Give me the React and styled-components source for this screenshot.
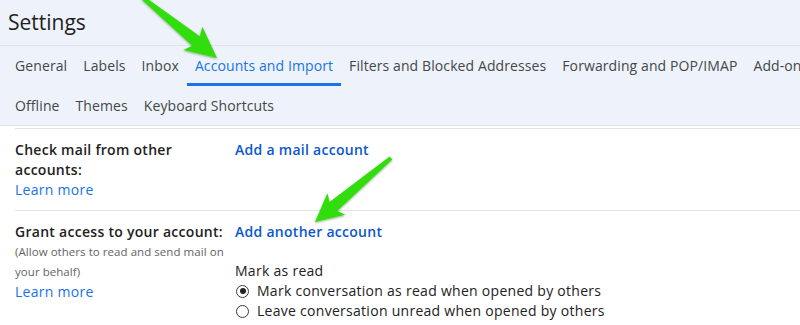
import styled, { createGlobalStyle } from 'styled-components';

const GlobalStyle = createGlobalStyle`
  html, body {
    margin: 0;
    padding: 0;
    background: #ffffff;
  }
  body {
    font-family: "Open Sans", Roboto, "Noto Sans", Arial, sans-serif;
    -webkit-font-smoothing: antialiased;
  }
`;

const arrowPoints = (tail, tip, head = 27, wing = 15, shaftTail = 1.5, shaftHead = 5.5) => {
  const dx = tip[0] - tail[0];
  const dy = tip[1] - tail[1];
  const len = Math.hypot(dx, dy);
  const ux = dx / len;
  const uy = dy / len;
  const nx = -uy;
  const ny = ux;
  const bx = tip[0] - ux * head;
  const by = tip[1] - uy * head;
  const wx = bx - ux * 4;
  const wy = by - uy * 4;
  const pts = [
    [tail[0] + nx * shaftTail, tail[1] + ny * shaftTail],
    [bx + nx * shaftHead, by + ny * shaftHead],
    [wx + nx * wing, wy + ny * wing],
    tip,
    [wx - nx * wing, wy - ny * wing],
    [bx - nx * shaftHead, by - ny * shaftHead],
    [tail[0] - nx * shaftTail, tail[1] - ny * shaftTail],
  ];
  return pts.map((p) => p.map((v) => v.toFixed(1)).join(',')).join(' ');
};

function App() {
  return (
    <>
      <GlobalStyle />
      <Page>
        <Header>
          <Title>Settings</Title>
        </Header>
        <Tabs>
          <TabRow>
            <Tab>General</Tab>
            <Tab>Labels</Tab>
            <Tab>Inbox</Tab>
            <Tab $active>Accounts and Import</Tab>
            <Tab>Filters and Blocked Addresses</Tab>
            <Tab>Forwarding and POP/IMAP</Tab>
            <Tab>Add-ons</Tab>
          </TabRow>
          <TabRow>
            <Tab>Offline</Tab>
            <Tab>Themes</Tab>
            <Tab>Keyboard Shortcuts</Tab>
          </TabRow>
        </Tabs>
        <Content>
          <Section>
            <Label>
              <LabelTitle>Check mail from other accounts:</LabelTitle>
              <Learn>Learn more</Learn>
            </Label>
            <Value>
              <Action>Add a mail account</Action>
            </Value>
          </Section>
          <Section>
            <Label>
              <LabelTitle>Grant access to your account:</LabelTitle>
              <Hint>
                (Allow others to read and send mail on
                <br />
                your behalf)
              </Hint>
              <Learn>Learn more</Learn>
            </Label>
            <Value>
              <Action>Add another account</Action>
              <SubHead>Mark as read</SubHead>
              <Option>
                <Radio $checked />
                Mark conversation as read when opened by others
              </Option>
              <Option>
                <Radio />
                Leave conversation unread when opened by others
              </Option>
            </Value>
          </Section>
        </Content>
        <Overlay width="800" height="325" viewBox="0 0 800 325">
          <defs>
            <filter id="shade" x="-20%" y="-20%" width="140%" height="140%">
              <feDropShadow dx="0" dy="1" stdDeviation="1.2" floodColor="#1a4d00" floodOpacity="0.45" />
            </filter>
          </defs>
          <polygon points={arrowPoints([143, -2], [217, 58], 27, 15, 2, 6)} fill="#33dd0a" filter="url(#shade)" />
          <polygon points={arrowPoints([391, 158], [315, 222], 24, 14, 2, 6)} fill="#33dd0a" filter="url(#shade)" />
        </Overlay>
      </Page>
    </>
  );
}

export default App;

const Page = styled.div`
  position: relative;
  width: 800px;
  height: 325px;
  overflow: hidden;
  background: #ffffff;
`;

const Header = styled.div`
  height: 45px;
  display: flex;
  align-items: center;
  padding-left: 8px;
  background: #eef3fb;
  border-bottom: 1px solid #dde3ea;
`;

const Title = styled.h1`
  margin: 0;
  font-size: 21px;
  font-weight: 400;
  color: #1f1f1f;
  margin-top: -1px;
`;

const Tabs = styled.div`
  background: #eef3fb;
  border-bottom: 1px solid #dde3ea;
  padding: 0 7px;
  height: 79px;
`;

const TabRow = styled.div`
  display: flex;
  white-space: nowrap;
  height: 40px;
`;

const Tab = styled.div`
  display: flex;
  align-items: center;
  padding: 2px 8px 0;
  height: 40px;
  box-sizing: border-box;
  font-size: 14px;
  letter-spacing: 0.1px;
  color: ${(p) => (p.$active ? '#1a73e8' : '#444746')};
  border-bottom: 3px solid ${(p) => (p.$active ? '#1a73e8' : 'transparent')};
  line-height: 20px;
`;

const Content = styled.div`
  margin: 2px 0 0 15px;
  border-top: 1px solid #e3e3e3;
`;

const Section = styled.div`
  display: flex;
  padding: 11px 0 10px;
  border-bottom: 1px solid #e3e3e3;
  line-height: 20px;
  letter-spacing: 0.28px;
`;

const Label = styled.div`
  width: 220px;
  flex-shrink: 0;
  padding-right: 2px;
  box-sizing: border-box;
`;

const LabelTitle = styled.div`
  font-size: 14px;
  font-weight: 600;
  color: #222222;
`;

const Hint = styled.div`
  font-size: 11.5px;
  letter-spacing: 0.05px;
  white-space: nowrap;
  color: #5f6368;
`;

const Learn = styled.div`
  font-size: 14px;
  color: #1a73e8;
`;

const Value = styled.div`
  display: flex;
  flex-direction: column;
`;

const Action = styled.div`
  font-size: 14px;
  font-weight: 600;
  color: #0b57d0;
`;

const SubHead = styled.div`
  margin-top: 19px;
  font-size: 14px;
  color: #222222;
`;

const Option = styled.div`
  display: flex;
  align-items: center;
  gap: 8px;
  font-size: 14px;
  color: #222222;
  height: 20px;
`;

const Radio = styled.span`
  position: relative;
  width: 13px;
  height: 13px;
  margin-left: 1px;
  box-sizing: border-box;
  border: 1.3px solid #3c3c3c;
  border-radius: 50%;

  &::after {
    content: '';
    display: ${(p) => (p.$checked ? 'block' : 'none')};
    position: absolute;
    inset: 2.5px;
    border-radius: 50%;
    background: #222222;
  }
`;

const Overlay = styled.svg`
  position: absolute;
  left: 0;
  top: 0;
  pointer-events: none;
`;
